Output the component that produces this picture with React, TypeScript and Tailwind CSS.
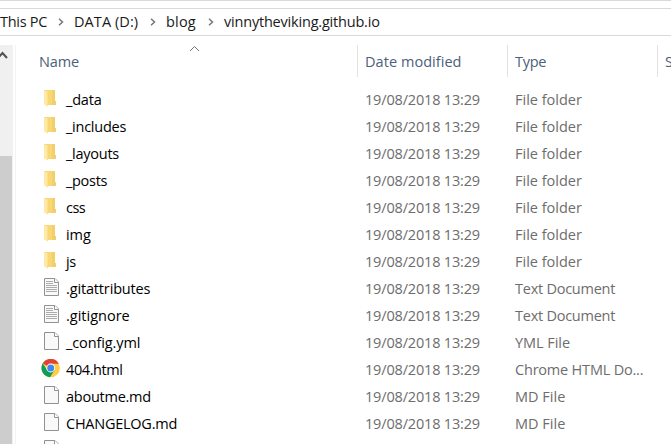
import React from "react";

type Kind = "folder" | "text" | "blank" | "chrome";
type Entry = { name: string; kind: Kind; type: string; spacing: string; typeSpacing: string };

const entries: Entry[] = [
  { name: "_data", kind: "folder", type: "File folder", spacing: "tracking-[-0.2px]", typeSpacing: "tracking-[0px]" },
  { name: "_includes", kind: "folder", type: "File folder", spacing: "tracking-[-0.25px]", typeSpacing: "tracking-[0px]" },
  { name: "_layouts", kind: "folder", type: "File folder", spacing: "tracking-[-0.25px]", typeSpacing: "tracking-[0px]" },
  { name: "_posts", kind: "folder", type: "File folder", spacing: "tracking-[-0.3px]", typeSpacing: "tracking-[0px]" },
  { name: "css", kind: "folder", type: "File folder", spacing: "tracking-[-0.5px]", typeSpacing: "tracking-[0px]" },
  { name: "img", kind: "folder", type: "File folder", spacing: "tracking-[-0.1px]", typeSpacing: "tracking-[0px]" },
  { name: "js", kind: "folder", type: "File folder", spacing: "tracking-[-0.3px]", typeSpacing: "tracking-[0px]" },
  { name: ".gitattributes", kind: "text", type: "Text Document", spacing: "tracking-[-0.15px]", typeSpacing: "tracking-[-0.25px]" },
  { name: ".gitignore", kind: "text", type: "Text Document", spacing: "tracking-[0px]", typeSpacing: "tracking-[-0.25px]" },
  { name: "_config.yml", kind: "blank", type: "YML File", spacing: "tracking-[-0.1px]", typeSpacing: "tracking-[-0.05px]" },
  { name: "404.html", kind: "chrome", type: "Chrome HTML Do...", spacing: "tracking-[-0.4px]", typeSpacing: "tracking-[-0.2px]" },
  { name: "aboutme.md", kind: "blank", type: "MD File", spacing: "tracking-[-0.25px]", typeSpacing: "tracking-[0px]" },
  { name: "CHANGELOG.md", kind: "blank", type: "MD File", spacing: "tracking-[-0.25px]", typeSpacing: "tracking-[0px]" },
  { name: "", kind: "blank", type: "", spacing: "", typeSpacing: "" },
];

function FileIcon({ kind }: { kind: Kind }) {
  if (kind === "folder")
    return (
      <svg width="20" height="20" viewBox="0 0 20 20" className="block">
        <path d="M3 1h11v11h1v4H4z" fill="#f8d775" />
        <path d="M11 1h3v11h1v4h-4z" fill="#f3cf6b" />
        <path d="M3 1.3l4 1.4V17.5l-4-2z" fill="#ffe9a6" />
        <path d="M6.5 3v14" stroke="#fbdf8d" />
      </svg>
    );
  if (kind === "chrome")
    return (
      <svg width="20" height="20" viewBox="0.3 1 20 20" className="block">
        <circle cx="10" cy="10" r="9.2" fill="#ffcd42" />
        <path d="M10 10L1.95 5.35A9.2 9.2 0 0 1 18.05 5.8H10z" fill="#db4437" />
        <path d="M1.95 5.35A9.2 9.2 0 0 0 9.4 19.2L13.7 12.1 6.4 12.1z" fill="#0f9d58" />
        <circle cx="10" cy="10" r="4.4" fill="#fff" />
        <circle cx="10" cy="10" r="3.5" fill="#4285f4" />
      </svg>
    );
  return (
    <svg width="20" height="20" viewBox="0 0 20 20" className="block">
      <path d="M3.5 .5h10.5l3.5 3.5v13.5h-14z" fill="#f9f9f9" stroke="#929292" />
      <path d="M13.5 .5v4h4" fill="#fff" stroke="#929292" />
      {kind === "text" && (
        <path d="M5 3.5h7M5 5.5h7M5 7.5h11M5 9.5h11M5 11.5h11M5 13.5h11" stroke="#ababab" />
      )}
    </svg>
  );
}

function Chevron() {
  return (
    <svg width="6" height="8" viewBox="0 0 6 8" className="block shrink-0">
      <path d="M1 .7L4.5 4 1 7.3" fill="none" stroke="#777" strokeWidth="1.5" />
    </svg>
  );
}

export default function App() {
  return (
    <div className="h-[444px] w-[671px] overflow-hidden whitespace-pre bg-white font-['Open_Sans','Noto_Sans',sans-serif] text-[14.5px] leading-[20px] text-black">
      <div className="h-[9px] border-y border-[#d9d9d9]" />
      <div className="flex h-[27px] items-center border-b border-[#d9d9d9] text-[#1a1a1a]">
        <div className="w-[58px] tracking-[-0.3px]">This PC</div>
        <Chevron />
        <div className="ml-[10px] w-[76px] tracking-[0.08px]">DATA (D:)</div>
        <Chevron />
        <div className="ml-[10px] w-[42px] tracking-[0.2px]">blog</div>
        <Chevron />
        <div className="ml-[10px] tracking-[-0.2px]">vinnytheviking.github.io</div>
      </div>
      <div className="flex pt-[9px]">
        <div className="h-[399px] w-[13px] shrink-0 bg-[#f0f0f0]">
          <svg width="13" height="20" viewBox="0 0 13 20" className="block">
            <path d="M-2 13L2.5 8 7 13" fill="none" stroke="#505050" strokeWidth="2" />
          </svg>
          <div className="mt-[91px] h-[288px] w-[12px] bg-[#cdcdcd]" />
        </div>
        <div className="ml-[2px] h-[399px] w-px shrink-0 bg-[#f3f3f3]" />
        <div className="w-[655px] shrink-0">
          <div className="flex h-[32px] text-[#4c607a]">
            <div className="flex w-[342px] shrink-0 border-r border-[#e2e2e2] pl-[23px] pt-[7px]">
              <span className="w-[150px] tracking-[-0.15px]">Name</span>
              <svg width="12" height="8" viewBox="0 0 12 8" className="-mt-[7px] block">
                <path d="M1 6L5.5 1.5 10 6" fill="none" stroke="#737373" />
              </svg>
            </div>
            <div className="w-[150px] shrink-0 border-r border-[#e2e2e2] pl-[7px] pt-[7px] tracking-[0.05px]">Date modified</div>
            <div className="w-[150px] shrink-0 border-r border-[#e2e2e2] pl-[7px] pt-[7px] tracking-[-0.25px]">Type</div>
            <div className="shrink-0 pl-[7px] pt-[7px]">Size</div>
          </div>
          <div className="pt-[9px]">
            {entries.map((entry, index) => (
              <div key={index} className="flex h-[27px] items-center">
                <div className="flex w-[349px] items-center pl-[25px]">
                  <div className="-mt-px mr-[5px]"><FileIcon kind={entry.kind} /></div>
                  <span className={entry.spacing}>{entry.name}</span>
                </div>
                <div className="w-[150px] tracking-[-0.17px] text-[#6d6d6d]">{entry.name && "19/08/2018 13:29"}</div>
                <div className={`text-[#6d6d6d] ${entry.typeSpacing}`}>{entry.type}</div>
              </div>
            ))}
          </div>
        </div>
      </div>
    </div>
  );
}
